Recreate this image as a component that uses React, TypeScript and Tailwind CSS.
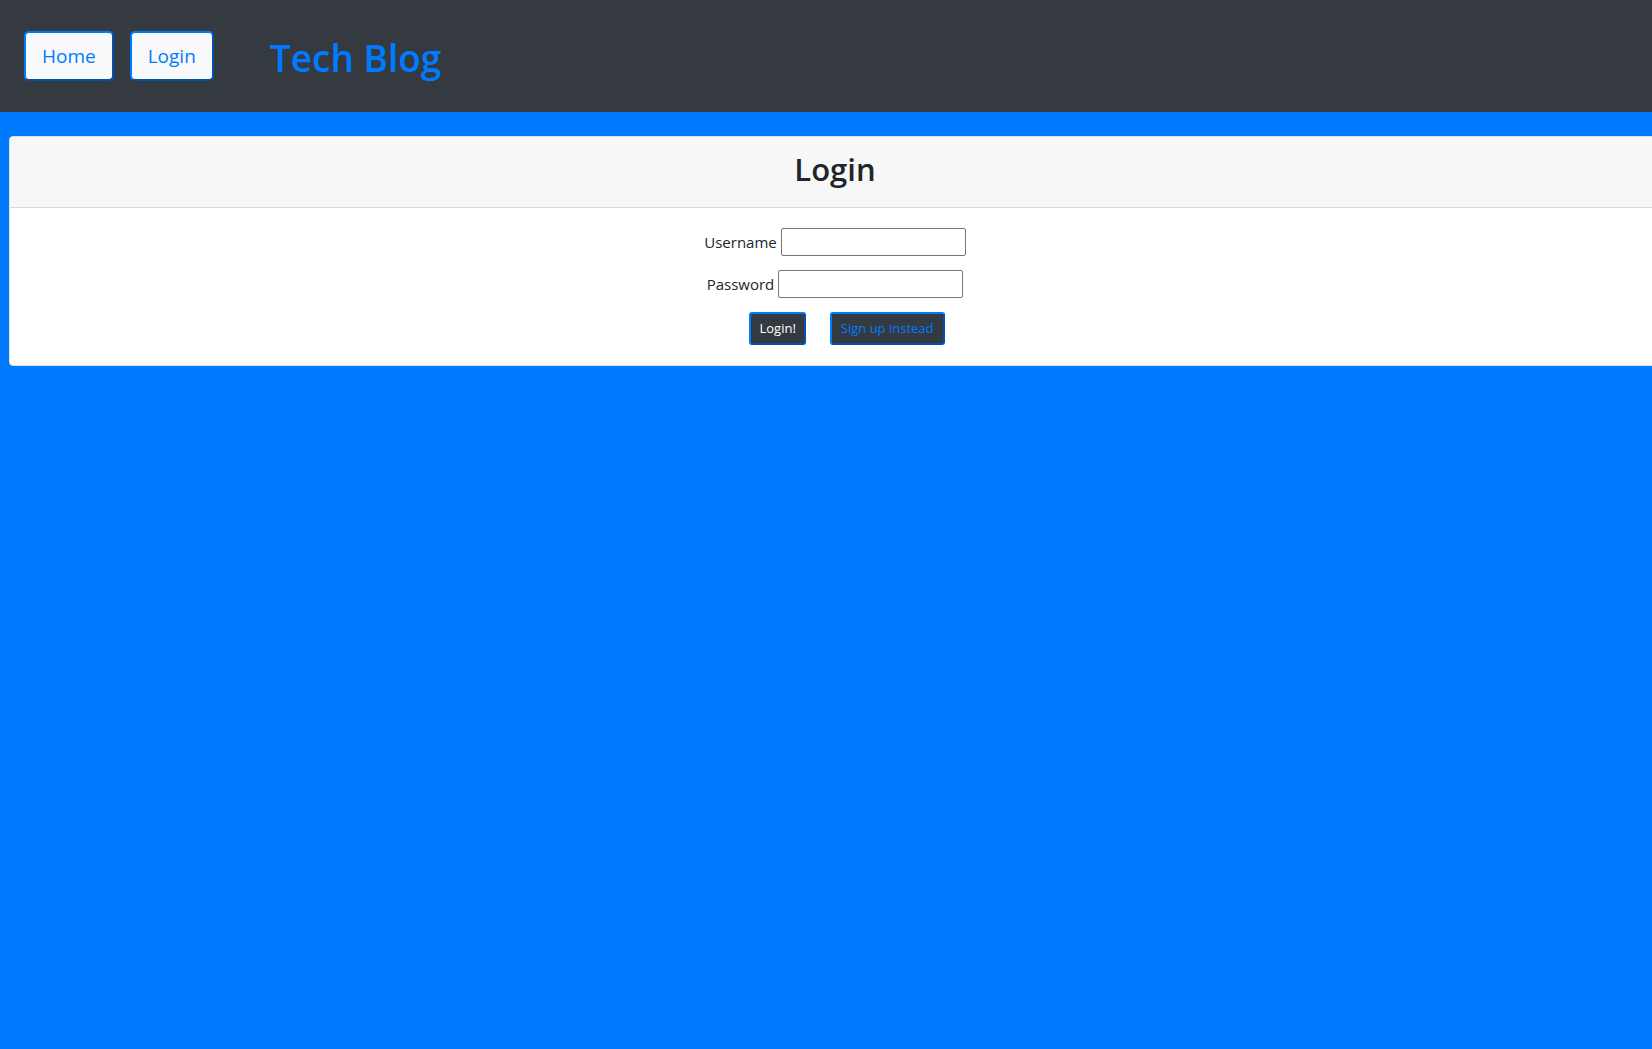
import type { ReactNode } from "react";

function NavButton({ children }: { children: ReactNode }) {
  return (
    <button
      type="button"
      className="h-[50px] rounded-[5px] border-2 border-[#007bff] bg-[#f8f9fa] px-4 pt-px text-[19px] text-[#007bff] [border-style:outset]"
    >
      {children}
    </button>
  );
}

function Field({ id, label, type }: { id: string; label: string; type: string }) {
  return (
    <div className="flex h-7 items-center justify-center gap-1">
      <label htmlFor={id} className="text-[15px]">
        {label}
      </label>
      <input
        id={id}
        type={type}
        className="h-7 w-[185px] rounded-[2px] border border-[#767676] bg-white px-1 text-[15px]"
      />
    </div>
  );
}

export default function App() {
  return (
    <div className="min-h-screen overflow-hidden bg-[#007bff] font-['Open_Sans','Noto_Sans',sans-serif] text-[#212529]">
      <header className="flex h-28 items-center bg-[#343a40] px-6">
        <nav className="flex gap-4">
          <NavButton>Home</NavButton>
          <NavButton>Login</NavButton>
        </nav>
        <h1 className="ml-14 pt-1 text-[37px] leading-[48px] font-semibold text-[#007bff]">Tech Blog</h1>
      </header>
      <main className="mt-6 ml-[9px] w-full overflow-hidden rounded-[4px] border border-[#dfdfdf] bg-white">
        <div className="h-[71px] border-b border-[#d8d8d8] bg-[#f7f7f7] pt-3">
          <h2 className="text-center text-[31px] leading-10 font-semibold">Login</h2>
        </div>
        <form className="flex flex-col gap-[14px] py-5" onSubmit={(e) => e.preventDefault()}>
          <Field id="username" label="Username" type="text" />
          <Field id="password" label="Password" type="password" />
          <div className="flex justify-center gap-6 pl-6 text-[13px]">
            <button
              type="submit"
              className="h-[33px] rounded-[3px] border-2 border-[#007bff] bg-[#343a40] px-2 pt-px text-white [border-style:outset]"
            >
              Login!
            </button>
            <button
              type="button"
              className="h-[33px] rounded-[3px] border-2 border-[#007bff] bg-[#343a40] px-[9px] pt-px text-[#007bff] [border-style:outset]"
            >
              Sign up instead
            </button>
          </div>
        </form>
      </main>
    </div>
  );
}
